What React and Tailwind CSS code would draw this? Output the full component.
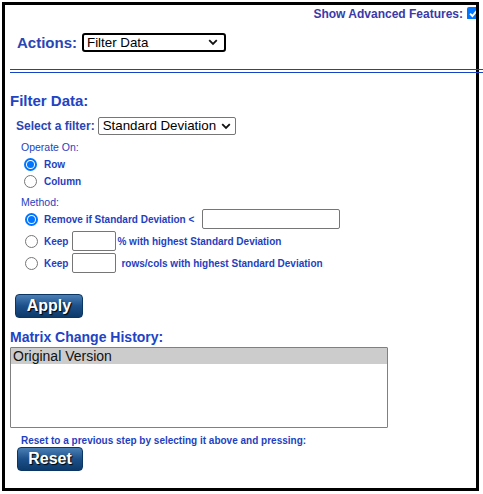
import React from 'react';

function Chevron() {
    return (
        <svg width="10" height="7" viewBox="0 0 10 7" className="shrink-0">
            <path d="M1.2 1.2 L5 5 L8.8 1.2" fill="none" stroke="#111" strokeWidth="1.8" />
        </svg>
    );
}

function Radio({ checked }) {
    return checked ? (
        <span className="w-[13px] h-[13px] rounded-full border-[2px] border-[#0075ff] flex items-center justify-center shrink-0">
            <span className="w-[7px] h-[7px] rounded-full bg-[#0075ff]" />
        </span>
    ) : (
        <span className="w-[13px] h-[13px] rounded-full border border-[#767676] bg-white shrink-0" />
    );
}

function BlueButton({ label, width }) {
    return (
        <button
            className={`${width} h-[24px] rounded-[4px] border border-[#0b3563] bg-gradient-to-b from-[#4a7fb5] via-[#1d5089] to-[#0c3a6b] text-white font-bold text-[16px] leading-none [text-shadow:1px_1px_1px_#000] flex items-center justify-center`}
        >
            {label}
        </button>
    );
}

export default function App() {
    return (
        <div className="w-[483px] h-[494px] bg-white whitespace-nowrap font-['Liberation_Sans',Arial,sans-serif]">
            <div className="ml-[2px] pt-[2px]">
                <div className="w-[477px] h-[489px] border-[3px] border-black flex flex-col">
                    {/* advanced toggle */}
                    <div className="h-[18px] flex items-center justify-end gap-[4px]">
                        <span className="text-[12px] font-bold text-[#3a3aa8] leading-none">Show Advanced Features:</span>
                        <span className="w-[9px] h-[12px] overflow-hidden -mt-[2px]">
                            <span className="w-[13px] h-[13px] rounded-[2px] bg-[#0075ff] flex items-center justify-center">
                                <svg width="11" height="11" viewBox="0 0 11 11">
                                    <path d="M2 5.6 L4.4 8 L9 2.6" fill="none" stroke="#fff" strokeWidth="1.9" />
                                </svg>
                            </span>
                        </span>
                    </div>

                    {/* actions */}
                    <div className="mt-[10px] h-[19px] pl-[12px] flex items-center gap-[5px]">
                        <span className="text-[15px] font-bold text-[#2a46b4] leading-none">Actions:</span>
                        <div className="w-[144px] h-[19px] border-2 border-black rounded-[3px] flex items-center justify-between pl-[3px] pr-[6px]">
                            <span className="text-[13.33px] text-black leading-none">Filter Data</span>
                            <Chevron />
                        </div>
                    </div>

                    <div className="mt-[17px] ml-[5px] w-[473px] h-[4px] border-y border-[#1544c4]" />

                    <div className="mt-[19px] ml-[5px] h-[18px] flex items-center text-[15px] font-bold text-[#2143c4]">Filter Data:</div>

                    {/* filter select */}
                    <div className="mt-[7px] ml-[11px] h-[18px] flex items-center gap-[3px]">
                        <span className="text-[12px] font-bold text-[#2a46b4] leading-none">Select a filter:</span>
                        <div className="w-[138px] h-[18px] border border-[#767676] rounded-[2px] flex items-center justify-between pl-[4px] pr-[4px]">
                            <span className="text-[13.33px] text-black leading-none">Standard Deviation</span>
                            <Chevron />
                        </div>
                    </div>

                    <div className="mt-[7px] ml-[16px] h-[12px] flex items-center text-[10.5px] text-[#1f3fc0]">Operate On:</div>
                    <div className="mt-[2px] ml-[19px] flex flex-col text-[10px] font-bold text-[#1f3fc0]">
                        <div className="h-[17px] flex items-center gap-[7px]">
                            <Radio checked />
                            <span>Row</span>
                        </div>
                        <div className="h-[17px] flex items-center gap-[7px]">
                            <Radio />
                            <span>Column</span>
                        </div>
                    </div>

                    <div className="mt-[7px] ml-[16px] h-[12px] flex items-center text-[10.5px] text-[#1f3fc0]">Method:</div>
                    <div className="ml-[20px] flex flex-col gap-[2px] text-[10px] font-bold text-[#1f3fc0]">
                        <div className="h-[20px] flex items-center">
                            <Radio checked />
                            <span className="ml-[6px]">Remove if Standard Deviation &lt;</span>
                            <span className="ml-[8px] w-[138px] h-[20px] border border-[#767676] rounded-[2px]" />
                        </div>
                        <div className="h-[20px] flex items-center">
                            <Radio />
                            <span className="ml-[6px]">Keep</span>
                            <span className="ml-[4px] w-[44px] h-[20px] border border-[#767676] rounded-[2px]" />
                            <span className="ml-[1px]">% with highest Standard Deviation</span>
                        </div>
                        <div className="h-[20px] flex items-center">
                            <Radio />
                            <span className="ml-[6px]">Keep</span>
                            <span className="ml-[4px] w-[44px] h-[20px] border border-[#767676] rounded-[2px]" />
                            <span className="ml-[5px]">rows/cols with highest Standard Deviation</span>
                        </div>
                    </div>

                    <div className="mt-[21px] ml-[10px]">
                        <BlueButton label="Apply" width="w-[68px]" />
                    </div>

                    <div className="mt-[11px] ml-[5px] h-[16px] flex items-center text-[14px] font-bold text-[#2143c4]">Matrix Change History:</div>
                    <div className="mt-[2px] ml-[5px] w-[378px] h-[81px] border border-[#808080] rounded-[1px]">
                        <div className="h-[16px] bg-[#cccccc] flex items-center pl-[2px] text-[14px] text-[#111]">Original Version</div>
                    </div>

                    <div className="mt-[6px] ml-[16px] h-[12px] flex items-center text-[10px] font-bold text-[#1f3fc0]">
                        Reset to a previous step by selecting it above and pressing:
                    </div>
                    <div className="mt-[1px] ml-[12px]">
                        <BlueButton label="Reset" width="w-[66px]" />
                    </div>
                </div>
            </div>
        </div>
    );
}
